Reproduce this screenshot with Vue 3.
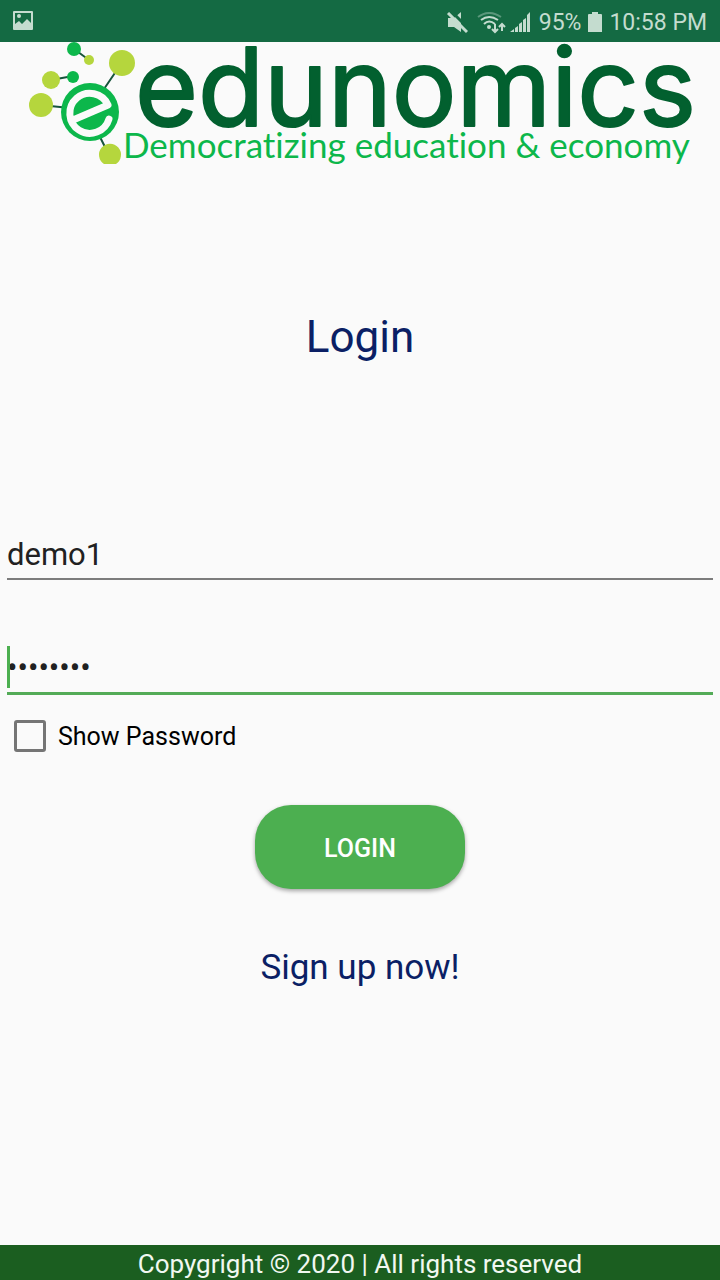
<script setup>
import { ref } from 'vue'

const username = ref('demo1')
const password = ref('demo1234')
const showPassword = ref(false)
</script>

<template>
  <div class="screen">
    <div class="status-bar">
      <svg class="picture" width="22" height="22" viewBox="0 0 22 22" aria-hidden="true">
        <path fill-rule="evenodd" d="M2 1H20Q21 1 21 2V19Q21 20 20 20H2Q1 20 1 19V2Q1 1 2 1ZM3 3V14L7 11L10 14L15 9L19 13V3Z" />
        <circle cx="7" cy="6" r="2" />
      </svg>
      <div class="status-right">
        <svg width="22" height="22" viewBox="0 0 22 22" aria-hidden="true">
          <path d="M2 6H8L15 0V20L8 15H2Z" />
          <path class="line gap" d="M5 -1L22 16" />
          <path class="line slash" d="M2 1L21 20" />
        </svg>
        <svg class="wifi" width="30" height="22" viewBox="0 0 30 22" aria-hidden="true">
          <path class="thin faint" d="M1 5Q12 -3 24 5" />
          <path class="thin" d="M4 8Q12 2 21 8M7 12Q12 7 18 12" />
          <circle cx="12" cy="15" r="2" />
          <path class="thin" d="M18 12V19M15 17L18 20L21 17M25 19V12M22 15L25 12L28 15" />
        </svg>
        <svg class="signal" width="22" height="22" viewBox="0 0 22 22" aria-hidden="true">
          <path d="M0 20L4 17V20ZM5 16L8 14V20H5ZM9 12L12 10V20H9ZM13 8L16 6V20H13ZM17 3L20 0V20H17Z" />
        </svg>
        <span>95%</span>
        <svg class="battery" width="16" height="22" viewBox="0 0 16 22" aria-hidden="true">
          <path d="M5 0H11V2H14Q15 2 15 3V20H1V3Q1 2 2 2H5Z" />
        </svg>
        <span>10:58 PM</span>
      </div>
    </div>

    <svg class="logo" viewBox="0 0 720 124" role="img" aria-label="edunomics">
      <path class="link" d="M74 7L89 18M51 38L73 34M40 63L70 66M104 47L121 22M98 91L109 113" />
      <circle class="green" cx="74" cy="7" r="7" />
      <circle class="green" cx="73" cy="35" r="6" />
      <circle class="lime" cx="89" cy="18" r="5" />
      <circle class="lime" cx="122" cy="21" r="13" />
      <circle class="lime" cx="51" cy="38" r="9" />
      <circle class="lime" cx="41" cy="63" r="12" />
      <path class="lime" d="M104 122A11 11 0 1 1 116 122Z" />
      <circle class="green" cx="90" cy="70" r="29" />
      <path class="mark" d="M73 78L108 63A20 20 0 1 0 109 77" />
      <text class="wordmark" x="135" y="84">edunomics</text>
      <text class="tagline" x="123" y="116">Democratizing education &amp; economy</text>
    </svg>

    <main>
      <h1>Login</h1>
      <form @submit.prevent>
        <input v-model="username" class="field" type="text" aria-label="Username" />
        <div class="password">
          <input v-model="password" class="field active" :type="showPassword ? 'text' : 'password'" aria-label="Password" />
          <span class="caret"></span>
        </div>
        <label class="show">
          <input v-model="showPassword" type="checkbox" />
          <span>Show Password</span>
        </label>
        <button type="submit">LOGIN</button>
      </form>
      <a class="signup" href="#signup">Sign up now!</a>
    </main>

    <footer>Copygright © 2020 | All rights reserved</footer>
  </div>
</template>

<style>
body {
  margin: 0;
  background: #fafafa;
}
</style>

<style scoped>
.screen {
  display: flex;
  flex-direction: column;
  min-height: 100vh;
  background: #fafafa;
  font-family: Roboto, "Liberation Sans", sans-serif;
}
.status-bar {
  display: flex;
  align-items: center;
  justify-content: space-between;
  height: 42px;
  padding: 0 13px 0 12px;
  background: #146a43;
  color: #c4dccf;
  font-size: 23px;
}
.status-bar svg {
  flex: none;
  fill: #c4dccf;
}
.status-right {
  display: flex;
  align-items: center;
  padding-top: 4px;
  line-height: 28px;
}
.status-bar .line,
.status-bar .thin {
  fill: none;
  stroke: #c4dccf;
  stroke-width: 3;
}
.status-bar .gap {
  stroke: #146a43;
}
.status-bar .thin {
  stroke-width: 2;
}
.status-bar .faint {
  opacity: 0.4;
}
.wifi {
  margin-left: 9px;
}
.signal {
  margin: 0 7px 0 3px;
}
.battery {
  margin: 0 6px;
}
.logo {
  display: block;
  width: 100%;
}
.link {
  fill: none;
  stroke: #17553c;
  stroke-width: 2;
}
.green {
  fill: #0cb74b;
}
.lime {
  fill: #b5d63d;
}
.mark {
  fill: none;
  stroke: #fafafa;
  stroke-width: 7;
  stroke-linecap: round;
  stroke-linejoin: round;
}
.wordmark {
  fill: #02602f;
  stroke: #02602f;
  stroke-width: 2;
  stroke-linejoin: round;
  font: 400 108px Inter, sans-serif;
}
.tagline {
  fill: #0cb74b;
  font: 400 35px Lato, sans-serif;
  font-variant-ligatures: none;
}
main {
  display: flex;
  flex: 1;
  flex-direction: column;
  align-items: center;
}
h1 {
  margin: 145px 0 0;
  color: #0b1f65;
  font-size: 44px;
  font-weight: 400;
  line-height: 52px;
}
form {
  display: flex;
  flex-direction: column;
  align-self: stretch;
  margin-top: 167px;
  padding: 0 7px;
}
.field {
  box-sizing: border-box;
  display: block;
  width: 100%;
  height: 50px;
  padding: 0;
  border: 0;
  border-bottom: 2px solid #7c7c7c;
  border-radius: 0;
  outline: 0;
  background: transparent;
  color: #212121;
  font: 400 31px Roboto, "Liberation Sans", sans-serif;
}
.password {
  position: relative;
  margin-top: 63px;
}
.field.active {
  height: 52px;
  border-bottom: 3px solid #53ab57;
}
.caret {
  position: absolute;
  top: 3px;
  left: 0;
  width: 3px;
  height: 42px;
  background: #4caf50;
}
.show {
  display: flex;
  align-items: center;
  align-self: flex-start;
  gap: 12px;
  margin: 24px 0 0 7px;
  color: #000;
  font-size: 25px;
  line-height: 32px;
}
.show span {
  padding-top: 2px;
}
.show input {
  box-sizing: border-box;
  width: 32px;
  height: 32px;
  margin: 0;
  border: 3px solid #757575;
  border-radius: 3px;
  appearance: none;
}
.show input:checked {
  background: #4caf50;
}
button {
  align-self: center;
  width: 210px;
  height: 84px;
  margin-top: 52px;
  padding: 2px 0 0;
  border: 0;
  border-radius: 36px;
  background: #4caf50;
  box-shadow: 0 2px 4px rgba(0, 0, 0, 0.35);
  color: #fff;
  font: 500 25px Roboto, "Liberation Sans", sans-serif;
}
.signup {
  margin: 57px 0 40px;
  color: #0b1f65;
  font-size: 35px;
  line-height: 44px;
  text-decoration: none;
}
footer {
  height: 35px;
  background: #1b5e20;
  color: #f1f8f1;
  font-size: 26px;
  line-height: 38px;
  text-align: center;
}
</style>
